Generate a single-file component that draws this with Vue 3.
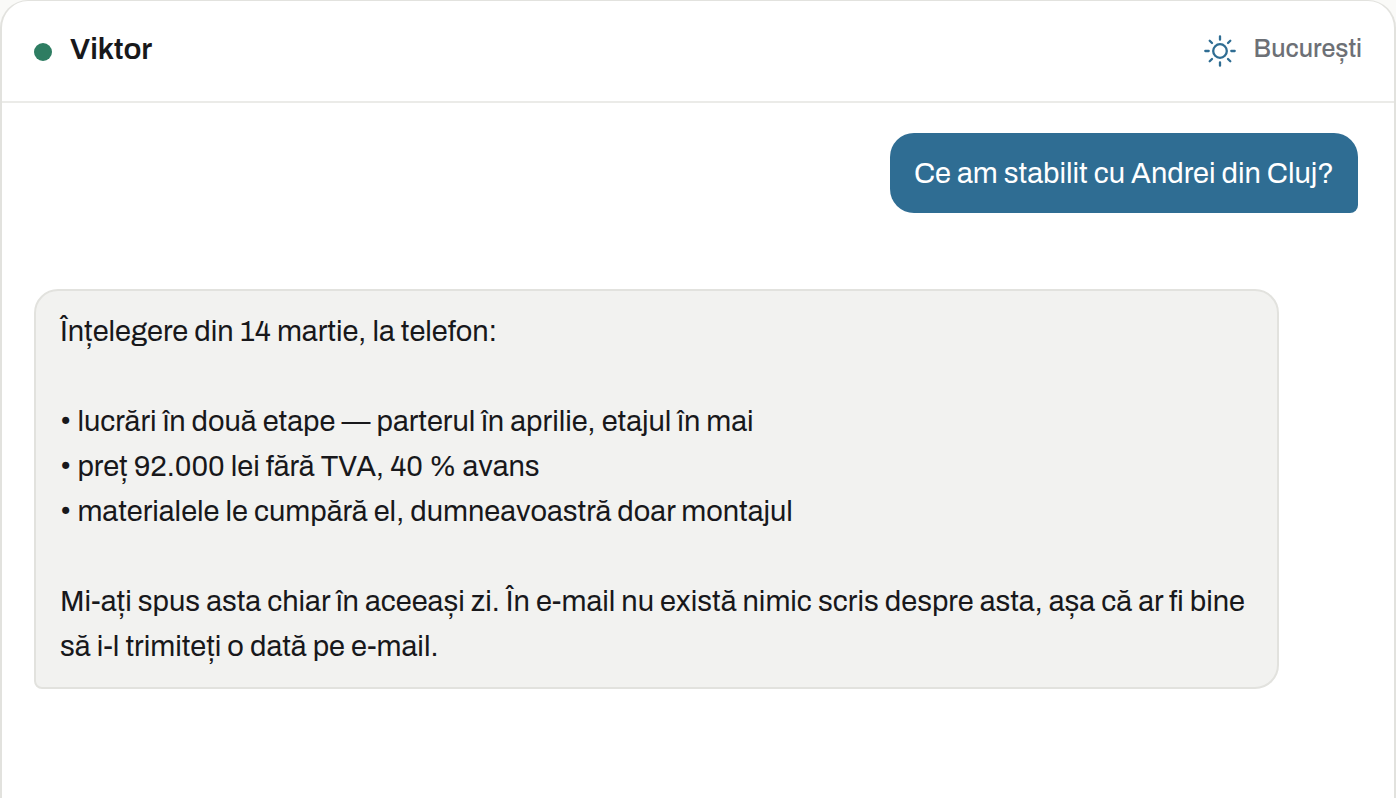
<script setup>
const contact = { name: 'Viktor', city: 'București' }

const question = 'Ce am stabilit cu Andrei din Cluj?'

const answer = `Înțelegere din 14 martie, la telefon:

• lucrări în două etape — parterul în aprilie, etajul în mai
• preț 92.000 lei fără TVA, 40 % avans
• materialele le cumpără el, dumneavoastră doar montajul

Mi-ați spus asta chiar în aceeași zi. În e-mail nu există nimic scris despre asta, așa că ar fi bine să i-l trimiteți o dată pe e-mail.`
</script>

<template>
  <main class="chat">
    <header class="chat-header">
      <div class="contact">
        <span class="status"></span>
        <h1 class="name">{{ contact.name }}</h1>
      </div>
      <div class="place">
        <svg class="sun" viewBox="0 0 32 32" aria-hidden="true">
          <circle cx="16" cy="16" r="6.8" />
          <path d="M16 1.3v3.4M16 27.3v3.4M1.3 16h3.4M27.3 16h3.4M5.7 5.7l2.3 2.3M24 24l2.3 2.3M5.7 26.3l2.3-2.3M24 8l2.3-2.3" />
        </svg>
        <span class="city">{{ contact.city }}</span>
      </div>
    </header>
    <section class="messages">
      <p class="bubble sent">{{ question }}</p>
      <p class="bubble received">{{ answer }}</p>
    </section>
  </main>
</template>

<style>
body {
  background: #fafaf8;
}
</style>

<style scoped>
.chat {
  box-sizing: border-box;
  min-height: 100vh;
  display: flex;
  flex-direction: column;
  background: #fff;
  border: 2px solid #e2e2de;
  border-top-width: 1px;
  border-bottom: 0;
  border-radius: 28px 28px 0 0;
  color: #18181b;
  font-family: Archivo, "Liberation Sans", Arial, sans-serif;
}

.chat-header {
  display: flex;
  align-items: flex-start;
  justify-content: space-between;
  padding: 26px 32px 30px;
  border-bottom: 2px solid #ebebe8;
}

.contact {
  display: flex;
  align-items: center;
  gap: 18px;
}

.status {
  width: 18px;
  height: 18px;
  margin-top: 6px;
  border-radius: 50%;
  background: #2e7d62;
}

.name {
  margin: 0;
  font-size: 30px;
  font-weight: 600;
  line-height: 44px;
}

.place {
  display: flex;
  align-items: center;
  gap: 18px;
}

.sun {
  width: 32px;
  height: 32px;
  margin-top: 4px;
  fill: none;
  stroke: #2f6d93;
  stroke-width: 2.3;
  stroke-linecap: round;
}

.city {
  color: #6d7076;
  font-size: 25px;
  font-weight: 500;
  line-height: 44px;
}

.messages {
  display: flex;
  flex-direction: column;
  gap: 76px;
  padding: 30px 36px 30px 32px;
}

.bubble {
  box-sizing: border-box;
  margin: 0;
  font-size: 29px;
  line-height: 45px;
  white-space: pre-line;
}

.sent {
  align-self: flex-end;
  padding: 18px 24px 17px;
  border-radius: 24px 24px 8px 24px;
  background: #2f6d93;
  color: #fff;
}

.received {
  align-self: flex-start;
  max-width: 94%;
  padding: 18px 24px;
  border: 2px solid #e2e2de;
  border-radius: 24px 24px 24px 8px;
  background: #f2f2f0;
}
</style>
